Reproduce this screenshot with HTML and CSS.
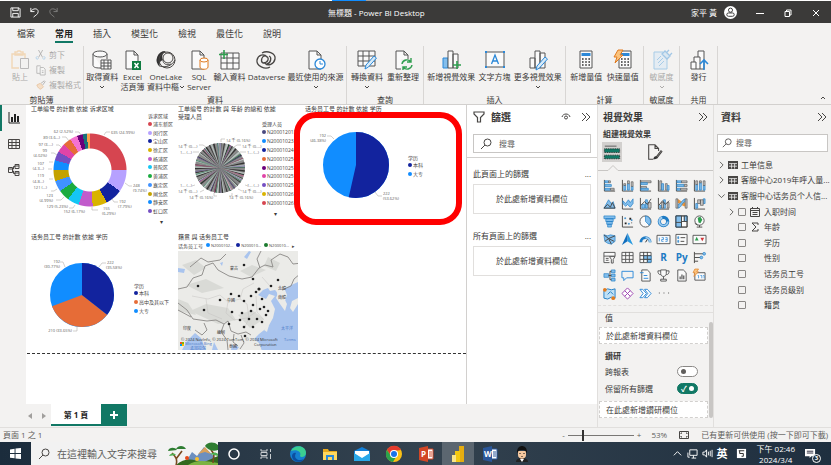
FILE: index.html
```html
<!DOCTYPE html>
<html lang="zh-Hant">
<head>
    <meta charset="UTF-8">
    <meta name="viewport" content="width=device-width, initial-scale=1.0">
    <title>無標題 - Power BI Desktop</title>
    <link rel="stylesheet" href="styles.css">
</head>
<body>
    <!-- Shared icons -->
    <svg class="defs" aria-hidden="true">
        <symbol id="i-down" viewBox="0 0 6 4"><path class="k" d="M1 1l2 2 2-2"/></symbol>
        <symbol id="i-right" viewBox="0 0 6 10"><path class="k" d="M1 1l4 4-4 4"/></symbol>
        <symbol id="i-collapse" viewBox="0 0 10 10"><path class="k" d="M1 1l4 4-4 4M5 1l4 4-4 4"/></symbol>
        <symbol id="i-search" viewBox="0 0 12 12"><circle class="k" cx="7.5" cy="4.5" r="3.5"/><path class="k" d="M5 7l-4 4"/></symbol>
        <symbol id="i-table" viewBox="0 0 10 10"><path fill="#484644" d="M0 1h10v8H0z"/><path stroke="#f3f2f1" stroke-width=".8" d="M1 3.6h8M1 6.2h8M3.6 3.6v5M6.6 3.6v5"/></symbol>
        <symbol id="i-doc" viewBox="0 0 20 20"><path class="w" d="M3 1h8l4 4v14H3zM11 1v4h4"/></symbol>
        <symbol id="i-calc" viewBox="0 0 20 20"><path class="w" d="M4 1h12v17H4z"/><path fill="#2b88d8" d="M5.500 3h9v3h-9z"/><path stroke="#333" stroke-width="1.600" stroke-dasharray="1.600 1.600" d="M6 9h9M6 12h9M6 15h9"/></symbol>
    </svg>

    <!-- Title bar -->
    <header class="titlebar">
        <div class="quick">
            <button aria-label="儲存"><svg viewBox="0 0 12 12"><path class="l" d="M1 1h9l1 1v9H1zM3 1v3h6V1M3 11V7h6v4"/></svg></button>
            <button aria-label="復原"><svg viewBox="0 0 12 12"><path class="l" d="M2 1v4h4M2 5c2-4 8-4 8 0 0 3-3 4-5 6"/></svg></button>
            <button aria-label="取消復原" disabled><svg viewBox="0 0 12 12"><path class="l" d="M10 1v4H6M10 5C8 1 2 1 2 5c0 3 3 4 5 6"/></svg></button>
        </div>
        <div class="title">無標題 - Power BI Desktop</div>
        <div class="account">
            <span>家平 黃</span>
            <svg class="avatar" viewBox="0 0 14 14"><circle cx="7" cy="7" r="7" fill="#fff"/><circle cx="7" cy="4.500" r="2.200" fill="none" stroke="#333"/><rect x="3" y="7.500" width="8" height="3.600" rx="1.800" fill="none" stroke="#333"/></svg>
            <div class="window-buttons">
                <button aria-label="最小化"><svg viewBox="0 0 8 8"><path class="l" d="M0 4.500h8"/></svg></button>
                <button aria-label="還原"><svg viewBox="0 0 8 8"><path class="l" d="M1 2.500h4.500v5H1zM2.500 2V1H7v5H6"/></svg></button>
                <button aria-label="關閉"><svg viewBox="0 0 8 8"><path class="l" d="M1 1l6 6M7 1L1 7"/></svg></button>
            </div>
        </div>
    </header>

    <!-- Ribbon tabs -->
    <nav class="menu">
        <a href="#file">檔案</a>
        <a href="#home" class="active">常用</a>
        <a href="#insert">插入</a>
        <a href="#modeling">模型化</a>
        <a href="#view">檢視</a>
        <a href="#optimize">最佳化</a>
        <a href="#help">說明</a>
    </nav>

    <!-- Ribbon -->
    <section class="ribbon">
        <div class="group disabled">
            <div class="tools clipboard">
                <button class="tool"><svg viewBox="0 0 20 20"><path fill="none" stroke="#f0b060" stroke-width="1.400" d="M9 18H2V4h13v4M5 4V2h2l1-1h2l1 1h2v3H5z"/><path fill="#f3f2f1" stroke="#666" d="M10.500 8.500h8v10h-8z"/></svg>貼上</button>
                <div class="small-tools">
                    <button><svg viewBox="0 0 12 12"><path class="k" d="M3 0l5 9M8 0L3 9"/><path stroke="#3a95dc" fill="none" d="M2 8a1.500 1.500 0 1 0 1 2M9 8a1.500 1.500 0 1 1-1 2"/></svg>剪下</button>
                    <button><svg viewBox="0 0 12 12"><path class="w" d="M5 10H1V1h4l1 1M5 3h4l2 2v7H5zM7 7h2M7 9h2"/></svg>複製</button>
                    <button><svg viewBox="0 0 12 12"><path fill="#f7c38c" stroke="#d9822b" d="M1 6l4-2 4 4-3 3c-2 0-4-2-5-5z"/><path class="k" d="M6 4l4-3 1 1-3 4"/></svg>複製格式</button>
                </div>
            </div>
            <h2>剪貼簿</h2>
        </div>
        <div class="group">
            <div class="tools">
                <button class="tool"><svg viewBox="0 0 20 20"><path class="w" d="M1 4v11c0 2 2 3 7 3h2M15 4v5"/><ellipse class="w" cx="8" cy="4" rx="7" ry="3"/><path class="w" d="M9 10h10v9H9zM9 13h10M9 16h10M12 10v9M16 10v9"/></svg>取得資料<svg class="down"><use href="#i-down"/></svg></button>
                <button class="tool"><svg viewBox="0 0 20 20"><use href="#i-doc"/><path fill="#107c41" d="M9 11h9v9H9z"/><path stroke="#fff" stroke-width="1.500" d="M11.500 13l4 5M15.500 13l-4 5"/></svg><span>Excel</span><span>活頁簿</span></button>
                <button class="tool"><svg viewBox="0 0 20 20"><path fill="#333" d="M10 1A9 9 0 0 0 4 17c-1-4 0-6 3-7C5 6 7 3 10 1z"/><circle class="k" cx="11" cy="10" r="8"/><circle class="k" cx="12" cy="8" r="5"/><path class="k" d="M4 16c5 2 12 0 15-6M7 10c0 4 4 6 8 4"/></svg><span>OneLake</span><span>資料中樞<svg class="down"><use href="#i-down"/></svg></span></button>
                <button class="tool"><svg viewBox="0 0 20 20"><use href="#i-doc"/><path fill="#fff" stroke="#e07b20" d="M11 10v7c0 3 8 3 8 0v-7"/><ellipse fill="#fff" stroke="#e07b20" cx="15" cy="10" rx="4" ry="2"/></svg><span>SQL</span><span>Server</span></button>
                <button class="tool"><svg viewBox="0 0 20 20"><path class="w" d="M2 3h18v16H2zM2 8h18M2 13h18M8 3v16M14 3v16"/><path stroke="#2f9e4f" stroke-width="1.600" d="M5 0v9M0 4.500h9"/></svg>輸入資料</button>
                <button class="tool"><svg viewBox="0 0 20 20"><path class="k" stroke-width="1.300" d="M6 3c5-3 14 0 13 6-1 5-7 8-10 4M14 17C9 20 0 16 1 10c1-5 7-7 10-3M13 6c3 1 2 7-2 8M7 13c-3-2-1-8 3-7 4 2 2 7-3 7z"/></svg>Dataverse</button>
                <button class="tool"><svg viewBox="0 0 20 20"><use href="#i-doc"/><circle cx="14" cy="14" r="5" fill="#fff" stroke="#2b88d8" stroke-width="1.300"/><path fill="none" stroke="#2b88d8" d="M14 11v3h3"/></svg>最近使用的來源<svg class="down"><use href="#i-down"/></svg></button>
            </div>
            <h2>資料</h2>
        </div>
        <div class="group">
            <div class="tools">
                <button class="tool"><svg viewBox="0 0 20 20"><path class="w" d="M1 1h17v15H1zM1 6h17M1 11h17M6 1v15M12 1v15"/><path fill="#d6eaf8" stroke="#2b88d8" d="M9 15l8-9 2.500 2-8 9-3.500 2z"/></svg>轉換資料<svg class="down"><use href="#i-down"/></svg></button>
                <button class="tool"><svg viewBox="0 0 20 20"><use href="#i-doc"/><path fill="#f3f2f1" d="M8 9h12v11H8z"/><path fill="none" stroke="#2f9e4f" stroke-width="1.400" d="M9 14a5 5 0 0 1 9-2M18 8v4h-4M19 15a5 5 0 0 1-9 2M10 20v-3h4"/></svg>重新整理</button>
            </div>
            <h2>查詢</h2>
        </div>
        <div class="group">
            <div class="tools">
                <button class="tool"><svg viewBox="0 0 20 20"><path fill="#83beec" stroke="#2b88d8" d="M2 8h5v10H2z"/><path class="w" d="M7 1h5v17H7zM12 4h5v14h-5z"/><path stroke="#2f9e4f" stroke-width="1.600" d="M16 11v8M12 15h8"/></svg>新增視覺效果</button>
                <button class="tool"><svg viewBox="0 0 20 20"><path class="w" d="M1 2h18v15H1z"/><path fill="#2b88d8" d="M0 1h2v2H0zM18 1h2v2h-2zM0 16h2v2H0zM18 16h2v2h-2z"/><path fill="none" stroke="#2b88d8" stroke-width="1.300" d="M6.500 14L10 5l3.500 9M7.500 11h5"/></svg>文字方塊</button>
                <button class="tool"><svg viewBox="0 0 20 20"><path class="w" d="M2 8h5v10H2zM7 1h5v17H7zM12 3h5v15h-5z"/><path fill="#d6eaf8" stroke="#2b88d8" d="M9 16l8-9 2.500 2-8 9-3.500 2z"/></svg>更多視覺效果<svg class="down"><use href="#i-down"/></svg></button>
            </div>
            <h2>插入</h2>
        </div>
        <div class="group">
            <div class="tools">
                <button class="tool"><svg viewBox="0 0 20 20"><use href="#i-calc"/></svg>新增量值</button>
                <button class="tool"><svg viewBox="0 0 20 20"><use href="#i-calc" x="2"/><path fill="#fbc37c" stroke="#e07b20" d="M5 0h5L7 5h3l-8 8 2-6H1z"/></svg>快速量值</button>
            </div>
            <h2>計算</h2>
        </div>
        <div class="group">
            <div class="tools disabled">
                <button class="tool"><svg viewBox="0 0 20 20"><path fill="#cfe5f6" stroke="#3a95dc" d="M2 2h9l4 6v11H2zM5 10l4-4M6 13l5-5M7 16l5-5"/><path fill="#b5d8f2" stroke="#2b88d8" stroke-width="1.300" d="M10 4l3-3 5 5-3 3zM15 2l2-2M18 5l2-2"/></svg>敏感度<svg class="down"><use href="#i-down"/></svg></button>
            </div>
            <h2>敏感度</h2>
        </div>
        <div class="group">
            <div class="tools">
                <button class="tool"><svg viewBox="0 0 20 20"><path class="w" d="M2 12h5v7H2zM5 12V7h6v12H7M9 7V1h6v18h-4"/><path fill="none" stroke="#2b88d8" stroke-width="1.600" d="M15 20v-9M11 14l4-4 4 4"/></svg>發行</button>
            </div>
            <h2>共用</h2>
        </div>
        <button class="fold" aria-label="摺疊功能區"><svg viewBox="0 0 6 4"><path class="k" d="M1 3l2-2 2 2"/></svg></button>
    </section>

    <!-- Workspace -->
    <main class="workspace">
        <div class="editor">
            <div class="stage">
                <nav class="rail">
                    <button class="active" aria-label="報表檢視"><svg viewBox="0 0 12 12"><path stroke="#222" fill="none" d="M1 0v11h11"/><path fill="#222" d="M3 5h2v5H3zM6 2h2v8H6zM9 4h2v6H9z"/></svg></button>
                    <button aria-label="資料表檢視"><svg viewBox="0 0 12 12"><path class="k" d="M.5 1.500h11v9H.5zM.5 4.500h11M.5 7.500h11M4 1.500v9M8 1.500v9"/></svg></button>
                    <button aria-label="模型檢視"><svg viewBox="0 0 12 12"><path class="k" d="M.5 3.500h4v5h-4zM7 .5h4v4H7zM7 7.500h4v4H7zM4.500 5h1V2.500H7M4.500 7h1v2.500H7M.5 5h4M7 2h4M7 9h4"/></svg></button>
                </nav>

                <section class="canvas">
                    <article class="visual">
                        <h3>工单编号 的計數 依據 诉求区域</h3>
                        <div class="chart">
                            <svg class="plot donut" viewBox="0 0 115 110" width="115" height="110">
                                <path class="lead" d="M73 22l2-3h4M94 70l4 3h3M81 86l2 3h4M61 94v3h6M44 92l-2 3h-4M33 84l-3 3h-5M26 76l-3 2h-3M22 66h-4M21 56h-4M22 49h-4M26 42l-3-2h-3M31 35l-3-3h-3M38 28l-3-4h-4M50 22l-2-3h-4"/>
                                <g class="lbl">
                                    <text x="80" y="21">635 (24.99%)</text>
                                    <text x="102" y="74">248</text><text x="102" y="79">(9.74%)</text>
                                    <text x="88" y="90">192</text><text x="87" y="95">(7.79%)</text>
                                    <text x="72" y="97">155</text><text x="71" y="102">(6.29%)</text>
                                    <text x="54" y="100" text-anchor="end">152 (6.17%)</text>
                                    <text x="37" y="95" text-anchor="end">129 (5.23%)</text>
                                    <text x="22" y="84" text-anchor="end">123</text><text x="22" y="89" text-anchor="end">(4.99%)</text>
                                    <text x="16" y="76" text-anchor="end">121 (...)</text>
                                    <text x="13" y="64" text-anchor="end">119</text><text x="13" y="70" text-anchor="end">(4.8...)</text>
                                    <text x="13" y="52" text-anchor="end">107</text><text x="13" y="57" text-anchor="end">(4.3...)</text>
                                    <text x="16" y="39" text-anchor="end">99</text><text x="16" y="44" text-anchor="end">(4.02%)</text>
                                    <text x="22" y="33" text-anchor="end">97 (3....)</text>
                                    <text x="29" y="26" text-anchor="end">89 (3.6...)</text>
                                    <text x="42" y="20" text-anchor="end">62 (2.52%)</text>
                                </g>
                            </svg>
                            <div class="legend tall">
                                <h4>诉求区域</h4>
                                <ul>
                                    <li class="c-red">浦东新区</li><li class="c-lav">闵行区</li><li class="c-navy">宝山区</li><li class="c-gold">徐汇区</li><li class="c-orchid">杨浦区</li><li class="c-cyan">普陀区</li><li class="c-green">黄浦区</li><li class="c-sky">嘉定区</li><li class="c-olive">闸北区</li><li class="c-blue">静安区</li><li class="c-violet">虹口区</li>
                                </ul>
                                <span class="more">▾</span>
                            </div>
                        </div>
                    </article>

                    <article class="visual">
                        <h3>工单编号 的計數 與 年龄 的總和 依據 受理人员</h3>
                        <div class="chart">
                            <svg class="plot" viewBox="0 0 84 100" width="84" height="100">
                                <g class="spokes" transform="rotate(-90 42 47)">
                                    <circle cx="42" cy="47" r="12.500" pathLength="100" stroke="#8a8a8a"/>
                                    <circle cx="42" cy="47" r="12.500" pathLength="100" stroke="#333" stroke-dasharray="1 1.600 .7 2"/>
                                    <circle cx="42" cy="47" r="12.500" pathLength="100" stroke="#b8c4c0" stroke-dasharray=".8 3.200 1.400 4"/>
                                    <circle cx="42" cy="47" r="12.500" pathLength="100" stroke="#6b5a9a" stroke-dasharray=".4 6.500 .5 9"/>
                                    <circle cx="42" cy="47" r="12.500" pathLength="100" stroke="#2f7a58" stroke-dasharray=".4 8.800" stroke-dashoffset="3"/>
                                    <circle cx="42" cy="47" r="12.500" pathLength="100" stroke="#c45a8a" stroke-dasharray=".4 11.300" stroke-dashoffset="5"/>
                                </g>
                                <path class="lead" d="M43 21v-3h4M56 26l3-2h4M62 31h6M67 64l3 1M60 68l4 2M54 72v3h-3M36 72v3h3M26 69l-4 2M17 64l-3 1M28 26l-3-2h-4M21 31h-6"/>
                                <g class="lbl">
                                    <text x="48" y="21">14 千 (0.16%)</text>
                                    <text x="64" y="27">14 千 (0....)</text><text x="69" y="33">1... (...)</text>
                                    <text x="0" y="27">14 千 (0....)</text><text x="2" y="33">1... (...)</text>
                                    <text x="2" y="66">1... (...)</text><text x="0" y="72">14 千 (0....)</text>
                                    <text x="11" y="78">14 千 (0.16%)</text>
                                    <text x="69" y="66">1... (...)</text><text x="64" y="72">14 千 (0....)</text><text x="51" y="78">14 千 (0.16%)</text>
                                </g>
                            </svg>
                            <div class="legend ids">
                                <h4>受理人员</h4>
                                <ul>
                                    <li class="c-slate">N2000120189</li><li class="c-blue">N2000102325</li><li class="c-navy">N2000102465</li><li class="c-orange">N2000102505</li><li class="c-plum">N2000102525</li><li class="c-pink">N2000102555</li><li class="c-violet">N2000102585</li><li class="c-gold">N2000102625</li><li class="c-red">N2000102637</li>
                                </ul>
                                <span class="more">▾</span>
                            </div>
                        </div>
                    </article>

                    <article class="visual">
                        <h3>话务员工号 的計數 依據 学历</h3>
                        <div class="chart">
                            <svg class="plot" viewBox="0 0 103 100" width="103" height="100">
                                <g class="pie" transform="rotate(-90 51 52)">
                                    <circle cx="51" cy="52" r="16.500" pathLength="100" stroke="#118dff"/>
                                    <circle cx="51" cy="52" r="16.500" pathLength="100" stroke="#12239e" stroke-dasharray="53.620 46.380"/>
                                </g>
                                <path class="lead" d="M29 26l-3-3h-4M70 79l3 4h4"/>
                                <g class="lbl">
                                    <text x="21" y="24" text-anchor="end">192</text><text x="21" y="29" text-anchor="end">(46.38%)</text>
                                    <text x="78" y="82">222</text><text x="78" y="87">(53.62%)</text>
                                </g>
                            </svg>
                            <div class="legend middle">
                                <h4>学历</h4>
                                <ul><li class="c-navy">本科</li><li class="c-blue">大专</li></ul>
                            </div>
                        </div>
                    </article>

                    <article class="visual">
                        <h3>话务员工号 的計數 依據 学历</h3>
                        <div class="chart">
                            <svg class="plot" viewBox="0 0 103 100" width="103" height="100">
                                <g class="pie small" transform="rotate(-90 51 54)">
                                    <circle cx="51" cy="54" r="16" pathLength="100" stroke="#118dff"/>
                                    <circle cx="51" cy="54" r="16" pathLength="100" stroke="#e66c37" stroke-dasharray="33.650 66.350" stroke-dashoffset="-35.580"/>
                                    <circle cx="51" cy="54" r="16" pathLength="100" stroke="#12239e" stroke-dasharray="35.580 64.420"/>
                                </g>
                                <path class="lead" d="M34 26l-2-5h-3M68 26l3-4h4M46 86v4h-4"/>
                                <g class="lbl">
                                    <text x="29" y="22" text-anchor="end">192</text><text x="29" y="27" text-anchor="end">(30.77%)</text>
                                    <text x="76" y="23">222</text><text x="75" y="28">(35.58%)</text>
                                    <text x="41" y="91" text-anchor="end">210 (33.65%)</text>
                                </g>
                            </svg>
                            <div class="legend middle">
                                <h4>学历</h4>
                                <ul><li class="c-navy">本科</li><li class="c-orange">高中及其以下</li><li class="c-blue">大专</li></ul>
                            </div>
                        </div>
                    </article>

                    <article class="visual map">
                        <h3>籍贯 與 话务员工号</h3>
                        <ul class="map-legend">
                            <li class="plain">话务员工号</li><li class="c-blue">N2000102...</li><li class="c-navy">N200010...</li><li class="c-forest">N200010...</li><li class="plain next">▸</li>
                        </ul>
                        <svg viewBox="0 0 120 99" width="120" height="99">
                            <path fill="#ebebe8" d="M0 0h120v99H0z"/>
                            <path fill="#d9dad6" d="M4 14l14-5 10 8-12 7zM8 34l20-6 18 9-22 5zM12 60l16-7 22 4 8 12-18 4zM62 20l12-6 14 5-15 7zM60 64l14-5 12 9-14 9zM0 48l10 4 8 12-18-4zM90 6l12 6-4 8-12-5z"/>
                            <path fill="#a9c4ee" d="M80 44l5-5 5-2 2 3 5-1 3 3-2 5 4 6 5 7 2-7-3-6-4-7 7-4 11-5v69H84l-3-8-5-4 5-5 9-7 5-9 2-9-4-8 4-5-6-2-3 5-4-2z"/>
                            <path fill="#ebebe8" d="M98 38l7-4 4 10-3 9-5-3zM114 50l6-3v6l-5 8-3-4zM91 74l-2 7-3-2zM64 86l5-2 2 3-4 3zM107 31l9-12 2 8-9 7z"/>
                            <path fill="#a9c4ee" d="M28 99l-5-12-6-5-8 8-5 9zM34 99l2-8 4 8zM54 94l7 2-2 3h-6zM0 17l7 1-1 4-6-1zM66 6l5-6 2 1-4 7zM42 12l3-1-1 4z"/>
                            <path class="border" d="M0 38l9-2 6-9 9-3 3-9 8-3 5 7 11 6 13 3 10-2 7-9 6-3 8 2-2-7 9-6 8 3 5 7 9-1-2 11-6 5-3 7-9 4M0 52l9 7 6 9 14 2 9-1 8 4 4-3 3 10 7 3 8-2 5 3M12 16l11-9 7 4 12-2 6-6M46 73l-3 8 6 8 1 10M26 72l3 7-5 5-7-5M63 84l3 8-4 6M82 17l-3-9 4-8M0 59l13 7M56 83l-1 8 5 4"/>
                            <path class="state" d="M14 45l16 3 12-4 8 7 12-3 7 5M28 48l2 14 14 6M50 51l-2 11 8 7 13-2 9-6M69 53l2 14-5 11M78 45l1 16 7 8M62 48l3-10 11-6M92 35l-8-9"/>
                            <g fill="#222"><circle cx="66" cy="14" r="1.300"/><circle cx="75" cy="28" r="1.300"/><circle cx="20" cy="35" r="1.300"/><circle cx="100" cy="29" r="1.300"/><circle cx="93" cy="35" r="1.300"/><circle cx="53" cy="43" r="1.300"/><circle cx="61" cy="45" r="1.300"/><circle cx="81" cy="38" r="1.600"/><circle cx="78" cy="41" r="1.300"/><circle cx="73" cy="45" r="1.300"/><circle cx="84" cy="48" r="1.300"/><circle cx="42" cy="49" r="1.300"/><circle cx="66" cy="50" r="1.300"/><circle cx="75" cy="54" r="1.300"/><circle cx="86" cy="56" r="1.300"/><circle cx="26" cy="59" r="1.300"/><circle cx="54" cy="61" r="1.300"/><circle cx="64" cy="62" r="1.300"/><circle cx="73" cy="60" r="1.300"/><circle cx="82" cy="58" r="1.300"/><circle cx="90" cy="60" r="1.300"/><circle cx="88" cy="64" r="1.300"/><circle cx="62" cy="69" r="1.300"/><circle cx="71" cy="68" r="1.300"/><circle cx="79" cy="68" r="1.300"/><circle cx="84" cy="71" r="1.300"/><circle cx="51" cy="73" r="1.300"/><circle cx="66" cy="76" r="1.300"/><circle cx="75" cy="76" r="1.300"/><circle cx="67" cy="85" r="1.300"/></g>
                            <g class="place">
                                <text x="52" y="19">蒙古</text><text x="49" y="51">中國</text><text x="100" y="39">北韓</text><text x="100" y="48">南韓</text><text x="5" y="79">印度</text><text x="39" y="83">緬甸</text><text x="51" y="97">泰國</text><text class="sea" x="103" y="79">太平洋</text><text class="sea" x="12" y="99">孟加拉灣</text>
                                <text x="3" y="90">© 2024 NavInfo, © 2024 TomTom, © 2024 Microsoft</text><text x="76" y="95">Corporation</text><text class="sea" x="106" y="90">Terms</text>
                                <text class="sea" x="7" y="94">Microsoft Bing</text>
                            </g>
                            <path fill="#f25022" d="M2 91h2v2H2z"/><path fill="#7fba00" d="M4 91h2v2H4z"/><path fill="#00a4ef" d="M2 93h2v2H2z"/><path fill="#ffb900" d="M4 93h2v2H4z"/>
                        </svg>
                    </article>
                    <div class="highlight"></div>
                </section>

                <!-- Filters -->
                <aside class="filters">
                    <div class="pane-head">
                        <svg class="i12" viewBox="0 0 12 12"><path class="k" stroke-width="1.200" d="M1 1h10v2L7.500 6.500V11h-3V6.500L1 3z"/></svg>
                        <h2>篩選</h2>
                        <svg class="i10 push" viewBox="0 0 10 10"><path class="k" d="M1 5c1-4 7-4 8 0"/><circle class="k" cx="5" cy="5.500" r="1.500"/></svg>
                        <button aria-label="收合"><svg class="i10"><use href="#i-collapse"/></svg></button>
                    </div>
                    <label class="search"><svg class="i12"><use href="#i-search"/></svg><input type="search" aria-label="搜尋篩選" placeholder="搜尋"></label>
                    <div class="filter-group">
                        <h3>此頁面上的篩選<span>...</span></h3>
                        <div class="drop">於此處新增資料欄位</div>
                    </div>
                    <div class="filter-group">
                        <h3>所有頁面上的篩選<span>...</span></h3>
                        <div class="drop">於此處新增資料欄位</div>
                    </div>
                </aside>
            </div>

            <!-- Page tabs -->
            <nav class="pages">
                <button aria-label="上一頁"><svg viewBox="0 0 4 6"><path fill="#a19f9d" d="M4 0v6L0 3z"/></svg></button>
                <button aria-label="下一頁"><svg viewBox="0 0 4 6"><path fill="#a19f9d" d="M0 0v6l4-3z"/></svg></button>
                <a href="#page1" class="page">第 1 頁</a>
                <button class="add" aria-label="新增頁面"><svg viewBox="0 0 8 8"><path stroke="#fff" stroke-width="2" d="M4 0v8M0 4h8"/></svg></button>
            </nav>
        </div>

        <!-- Visualizations -->
        <aside class="visuals-pane">
            <div class="pane-head">
                <h2>視覺效果</h2>
                <button class="push" aria-label="收合"><svg class="i10"><use href="#i-collapse"/></svg></button>
            </div>
            <h3>組建視覺效果</h3>
            <div class="modes">
                <button class="active" aria-label="組建"><svg viewBox="0 0 20 20"><path stroke="#555" d="M2 3.500h13"/><path fill="#117865" stroke="#222" stroke-dasharray="1 1" d="M1.500 6.500h17v4h-17zM1.500 13.500h17v4h-17z"/></svg></button>
                <button aria-label="格式"><svg viewBox="0 0 20 20"><path class="k" stroke-width="1.200" d="M8 18H3V2h7l4 4v3M10 2v4h4M17 8l-6 8M18 9l-6 8"/><path fill="#333" d="M8 18c1-4 3-4 5-2-1 2-3 2-5 2z"/></svg></button>
            </div>
            <svg class="caret" viewBox="0 0 116 8" preserveAspectRatio="xMinYMid slice"><path class="line" d="M0 6.500h10l5-5 5 5h196"/></svg>
            <div class="gallery">
                <button aria-label="堆疊橫條圖"><svg viewBox="0 0 14 14"><path class="k" d="M1.500 1v12H13"/><path class="b" d="M2 2h4v2H2zM2 6h7v2H2zM2 10h6v2H2z"/><path class="g" d="M6 2h2v2H6zM8 10h4v2H8z"/></svg></button>
                <button aria-label="堆疊直條圖"><svg viewBox="0 0 14 14"><path class="k" d="M1.500 1v12H13"/><path class="b" d="M3 7h2v5H3zM7 5h2v7H7zM11 8h2v4h-2z"/><path class="g" d="M3 5h2v2H3zM7 2h2v3H7zM11 3h2v5h-2z"/></svg></button>
                <button aria-label="群組橫條圖"><svg viewBox="0 0 14 14"><path class="k" d="M1.500 1v12H13"/><path class="g" d="M2 2h11v2H2zM2 8h6v2H2z"/><path class="b" d="M2 4h7v2H2zM2 10h8v2H2z"/></svg></button>
                <button aria-label="群組直條圖"><svg viewBox="0 0 14 14"><path class="k" d="M1.500 1v12H13"/><path class="g" d="M3 2h2v10H3zM9 5h2v7H9z"/><path class="b" d="M5 5h2v7H5zM11 7h2v5h-2z"/></svg></button>
                <button aria-label="百分比橫條圖"><svg viewBox="0 0 14 14"><path class="k" d="M1.500 1v12H13"/><path class="b" d="M2 2h5v2H2zM2 6h8v2H2zM2 10h4v2H2z"/><path class="g" d="M7 2h6v2H7zM10 6h3v2h-3zM6 10h7v2H6z"/></svg></button>
                <button aria-label="百分比直條圖"><svg viewBox="0 0 14 14"><path class="k" d="M1.500 1v12H13"/><path class="b" d="M3 6h2v6H3zM7 4h2v8H7zM11 7h2v5h-2z"/><path class="g" d="M3 2h2v4H3zM7 2h2v2H7zM11 2h2v5h-2z"/></svg></button>

                <button aria-label="折線圖"><svg viewBox="0 0 14 14"><path class="b" d="M1 12l5-9 3 4 2-2 2 7z"/><path class="k" d="M1 12l4-4 3 3 2-5 3 6z"/></svg></button>
                <button aria-label="區域圖"><svg viewBox="0 0 14 14"><path class="k" d="M1.500 1v12H13"/><path class="b" d="M2 4l3 3 3-4 2 3 3-4v5l-3 4-3-3-2 2-3-3z"/></svg></button>
                <button aria-label="折線與直條圖"><svg viewBox="0 0 14 14"><path class="k" d="M1.500 1v12H13"/><path class="b" d="M3 8h3v4H3zM7 3h2v9H7z"/><path class="g" d="M10 6h3v6h-3z"/><path class="k" d="M2 9l4-4 3 3 4-6"/></svg></button>
                <button aria-label="折線與群組直條圖"><svg viewBox="0 0 14 14"><path class="k" d="M1.500 1v12H13"/><path class="b" d="M3 9h2v3H3zM7 3h2v9H7z"/><path class="g" d="M5 6h2v6H5zM11 6h2v6h-2z"/><path class="k" d="M2 9l4-5 3 4 4-4"/></svg></button>
                <button aria-label="緞帶圖"><svg viewBox="0 0 14 14"><path fill="#f0983a" d="M2 2c4 1 4 4 10 4v4C8 11 6 7 2 6z"/><path class="b" d="M3 8c4 0 4-5 8-6v3c-4 1-4 7-8 7z"/><path class="g" d="M1 2h2v10H1zM11 2h2v10h-2z"/></svg></button>
                <button aria-label="瀑布圖"><svg viewBox="0 0 14 14"><path class="k" d="M1.500 1v12H13"/><path class="b" d="M3 7h2v5H3zM11 2h2v5h-2z"/><path class="g" d="M5 3h3v4H5zM8 3h3v6H8z"/></svg></button>

                <button aria-label="漏斗圖"><svg viewBox="0 0 14 14"><path class="b" d="M1 1h12v3H1zM3 4h8v3H3zM4 7h6v3H4zM5 10h4v3H5z"/></svg></button>
                <button aria-label="散佈圖"><svg viewBox="0 0 14 14"><path class="k" d="M1.500 1v12H13"/><path fill="#222" d="M4 8h2v2H4zM9 3h2v2H9zM11 8h1v1h-1z"/><path class="b" d="M4 3h1v1H4zM8 9h1v1H8zM11 5h1v1h-1z"/></svg></button>
                <button aria-label="圓形圖"><svg viewBox="0 0 14 14"><circle class="w" cx="7" cy="7" r="6"/><path class="b" d="M7 1a6 6 0 0 1 4 10L7 7z"/></svg></button>
                <button aria-label="環圈圖"><svg viewBox="0 0 14 14"><circle cx="7" cy="7" r="4.500" fill="none" stroke="#1e7bc4" stroke-width="3.500"/><circle cx="7" cy="7" r="4.500" fill="none" stroke="#9ccbef" stroke-width="2" pathLength="10" stroke-dasharray="7 3"/></svg></button>
                <button aria-label="樹狀圖"><svg viewBox="0 0 14 14"><path class="w" d="M1 1h12v12H1z"/><path class="b" d="M1 1h6v12H1zM10 1h3v6h-3z"/><path class="k" d="M1 1h12v12H1zM7 1v12M7 7h6M1 8h6M10 1v6"/></svg></button>
                <button aria-label="地圖"><svg viewBox="0 0 14 14"><circle class="w" cx="7" cy="6" r="5"/><path fill="#2f9e4f" d="M5 3l3-1 2 3-2 4-2-1z"/><path class="k" d="M7 11v2M4 13h6M2 9l3 2"/></svg></button>

                <button aria-label="區域分布圖"><svg viewBox="0 0 14 14"><path class="b" d="M1 2l4 1 3-1 5 1v6l-4 3-4-1-3-2z"/><path class="k" d="M1 2l5 4 7-3M2 9l4-3 3 6M6 6l6 3"/></svg></button>
                <button aria-label="Azure 地圖"><svg viewBox="0 0 14 14"><path fill="#2b9be0" d="M7 0l6 13-6-4z"/><path fill="#106ebe" d="M7 0v9l-6 4z"/></svg></button>
                <button aria-label="量測計"><svg viewBox="0 0 14 14"><path fill="none" stroke="#1e7bc4" stroke-width="3" d="M2 10a5 5 0 0 1 10 0"/><path fill="none" stroke="#9ccbef" stroke-width="2" d="M7 5a5 5 0 0 1 5 5"/><path stroke="#222" d="M7 10l2-3"/></svg></button>
                <button aria-label="卡片"><svg viewBox="0 0 14 14"><path class="w" d="M0 2.500h14v9H0z"/><path fill="none" stroke="#2b88d8" stroke-width=".8" d="M2.500 5v4M5 5h2v2H5v2h2M9 5h2v4H9M9 7h2"/></svg></button>
                <button aria-label="多列卡片"><svg viewBox="0 0 14 14"><path class="w" d="M1 1.500h12v11H1z"/><path class="b" d="M3 4h1v2H3zM3 8h1v2H3z"/><path class="k" d="M6 5h5M6 9h4"/></svg></button>
                <button aria-label="KPI"><svg viewBox="0 0 14 14"><path class="w" d="M0 2.500h14v9H0z"/><path fill="#2f9e4f" d="M2 8l2-4 2 4z"/><path fill="#d13438" d="M8 5h4l-2 4z"/></svg></button>

                <button aria-label="交叉分析篩選器"><svg viewBox="0 0 14 14"><path class="w" d="M1 1.500h12v4H1zM1 5.500v7h6M3 8h3M3 10h3"/><path class="w" d="M7 6h6l-2 3v4H9V9z"/></svg></button>
                <button aria-label="資料表"><svg viewBox="0 0 14 14"><path class="w" d="M1 1.500h12v11H1zM1 5h12M1 9h12M5 1v11M9 1v11"/></svg></button>
                <button aria-label="矩陣"><svg viewBox="0 0 14 14"><path class="w" d="M1 1.500h12v11H1z"/><path class="b" d="M5 5h8v4H5zM9 9h4v3H9z"/><path class="k" d="M1 5h12M1 9h12M5 1v11M9 1v11"/></svg></button>
                <button aria-label="R 指令碼">R</button>
                <button aria-label="Python 指令碼">Py</button>
                <button aria-label="關鍵影響因數"><svg viewBox="0 0 14 14"><path class="k" d="M1.500 1v12M1.500 3h10M1.500 7h7M1.500 11h4"/><circle class="b" cx="12" cy="3" r="1.500"/><circle class="b" cx="9" cy="7" r="1.500"/></svg></button>

                <button aria-label="分解樹狀結構"><svg viewBox="0 0 14 14"><path class="b" d="M1 5h5v4H1zM9 1h4v3H9zM9 5.500h4v3H9zM9 10h4v3H9z"/><path class="k" d="M6 7h3M7.500 2.500v9M7.500 2.500H9M7.500 11.500H9"/></svg></button>
                <button aria-label="問與答"><svg viewBox="0 0 14 14"><path fill="none" stroke="#2b88d8" d="M1 2.500h12v7H6l-3 3v-3H1z"/></svg></button>
                <button aria-label="智慧敘述"><svg viewBox="0 0 14 14"><path class="w" d="M3 1h6l3 3v9H3z"/><path stroke="#2b88d8" d="M1 4h4M5 7h4M5 10h5"/></svg></button>
                <button aria-label="計量"><svg viewBox="0 0 14 14"><path class="w" d="M4 1h6v4c0 4-6 4-6 0zM4 2H1c0 3 1 4 3 4M10 2h3c0 3-1 4-3 4M7 8v3M4 13v-2h6v2z"/></svg></button>
                <button aria-label="分頁報表"><svg viewBox="0 0 14 14"><path class="w" d="M3 1h6l3 3v9H3z"/><path fill="#222" d="M5 8h1v3H5zM7 6h1v5H7zM9 7h1v4H9z"/></svg></button>
                <button aria-label="新卡片"><svg viewBox="0 0 14 14"><path class="w" d="M2 4h11v8H2z"/><path fill="none" stroke="#2b88d8" stroke-width=".8" d="M5 7h1v3M8 7h1.500v3M11 7h1v3"/><path fill="#fbc37c" stroke="#e07b20" stroke-width=".7" d="M2 0h4L4 3h2L1 8l1-4H0z"/></svg></button>

                <button aria-label="ArcGIS"><svg viewBox="0 0 14 14"><path fill="#bfe0f5" stroke="#1e7bc4" d="M1 4l4-2 4 1 4-1v10l-4-1-4 2-4-1z"/><path fill="none" stroke="#1e7bc4" d="M5 8l3-3 3 3"/><circle cx="2" cy="3" r="2" fill="#e07b20"/><circle cx="11" cy="12" r="2" fill="#e07b20"/></svg></button>
                <button aria-label="Power Apps"><svg viewBox="0 0 14 14"><path fill="#fff" stroke="#9b3fae" d="M7 1l6 6-6 6-6-6zM4 4l6 6M10 4l-6 6"/></svg></button>
                <button aria-label="Power Automate"><svg viewBox="0 0 14 14"><path fill="#fff" stroke="#2b88d8" d="M6 2.500h3l4 4.500-4 4.500H6L9.500 7z"/><path fill="#fff" stroke="#2b88d8" d="M1 2.500h3L8 7l-4 4.500H1L4.500 7z"/></svg></button>
                <button aria-label="更多"><svg viewBox="0 0 14 14"><path fill="#555" d="M2 6h1v1H2zM7 6h1v1H7zM12 6h1v1h-1z"/></svg></button>
            </div>
            <div class="wells">
                <div class="well-body">
                    <h4>值</h4>
                    <div class="well">於此處新增資料欄位</div>
                    <h4 class="strong">鑽研</h4>
                    <label class="switch">跨報表<input type="checkbox"></label>
                    <label class="switch">保留所有篩選<input type="checkbox" checked></label>
                    <div class="well">在此處新增鑽研欄位</div>
                </div>
                <div class="scroll"></div>
            </div>
        </aside>

        <!-- Data -->
        <aside class="data-pane">
            <div class="pane-head">
                <h2>資料</h2>
                <button class="push" aria-label="收合"><svg class="i10"><use href="#i-collapse"/></svg></button>
            </div>
            <label class="search"><svg class="i10"><use href="#i-search"/></svg><input type="search" aria-label="搜尋資料" placeholder="搜尋"></label>
            <ul class="tree">
                <li><svg class="arrow"><use href="#i-right"/></svg><svg class="i10"><use href="#i-table"/></svg><span>工单信息</span></li>
                <li><svg class="arrow"><use href="#i-right"/></svg><svg class="i10"><use href="#i-table"/></svg><span>客服中心2019年呼入量...</span></li>
                <li><svg class="arrow open"><use href="#i-right"/></svg><svg class="i10"><use href="#i-table"/></svg><span>客服中心话务员个人信...</span></li>
                <li class="field"><svg class="arrow"><use href="#i-right"/></svg><label><input type="checkbox"><svg class="i10" viewBox="0 0 10 10"><path class="k" d="M.5 1.500h9v8h-9zM.5 3.500h9M2.500 0v2M7.500 0v2M2.500 5.500h5M2.500 7.500h5"/></svg>入职时间</label></li>
                <li class="field"><i class="arrow"></i><label><input type="checkbox"><svg class="i10" viewBox="0 0 10 10"><path class="k" d="M8 3V1H2l4 4-4 4h6V7"/></svg>年龄</label></li>
                <li class="field"><i class="arrow"></i><label><input type="checkbox"><i class="i10"></i>学历</label></li>
                <li class="field"><i class="arrow"></i><label><input type="checkbox"><i class="i10"></i>性别</label></li>
                <li class="field"><i class="arrow"></i><label><input type="checkbox"><i class="i10"></i>话务员工号</label></li>
                <li class="field"><i class="arrow"></i><label><input type="checkbox"><i class="i10"></i>话务员级别</label></li>
                <li class="field"><i class="arrow"></i><label><input type="checkbox"><i class="i10"></i>籍贯</label></li>
            </ul>
        </aside>
    </main>

    <!-- Status bar -->
    <footer class="status">
        <span>頁面 1 之 1</span>
        <div class="zoom">
            <span>-</span>
            <input type="range" min="10" max="200" value="53" aria-label="縮放">
            <span>+</span>
        </div>
        <span class="percent">53%</span>
        <svg class="fit" viewBox="0 0 10 8"><path class="k" d="M.5.5h9v7h-9z"/><path class="k" d="M2 3V2h1M7 2h1v1M8 5v1H7M3 6H2V5"/></svg>
        <span class="update">已有更新可供使用 (按一下即可下載)</span>
    </footer>

    <!-- Windows taskbar -->
    <footer class="taskbar">
        <button class="start" aria-label="開始"><svg viewBox="0 0 12 12"><path fill="#fff" d="M0 1.500l5-.7v4.700H0zM6 .6l6-.6v5.500H6zM0 6.500h5v4.700l-5-.7zM6 6.500h6V12l-6-.6z"/></svg></button>
        <label class="task-search">
            <svg class="i12"><use href="#i-search"/></svg>
            <input type="search" aria-label="搜尋" placeholder="在這裡輸入文字來搜尋">
            <svg class="art" viewBox="0 0 50 23"><path fill="#6c8fbf" d="M16 23l8-13 5 4 7-9 14 13v5z"/><path fill="#d8a15c" d="M30 12l7-7 6 7-6-2z"/><path fill="#33691e" d="M8 23c8-7 17-7 26-2l16-7v9z"/><path fill="#7cb342" d="M20 23c7-5 15-5 30-2v2z"/><path fill="none" stroke="#7a4a21" stroke-width="1.600" d="M8 23c2-6-1-9-4-12M8 17l6-8M45 21l1-9-3-4"/><path fill="#2e7d32" d="M0 9c1-4 7-4 9-1zM8 7c2-4 8-4 10 0zM37 4c2-4 9-5 13-1v5c-5 2-10 0-13-4z"/><path fill="#4caf50" d="M1 14c2-3 5-3 7-1zM42 12c3-2 6-2 8 0v2z"/><circle cx="19" cy="16" r="2" fill="#e64a19"/><circle cx="29" cy="17" r="2" fill="#fbc02d"/></svg>
        </label>
        <div class="apps">
            <button aria-label="Cortana"><svg viewBox="0 0 16 16"><circle cx="8" cy="8" r="5" fill="none" stroke="#fff" stroke-width="1.500"/></svg></button>
            <button aria-label="工作檢視"><svg viewBox="0 0 16 16"><path fill="none" stroke="#c8ccd0" d="M3 3v2h6V3M3 13v-2h6v2M3 6.500h6v3H3zM12.500 3v3M12.500 8v5"/></svg></button>
            <button aria-label="Edge"><svg viewBox="0 0 16 16"><circle cx="8" cy="8" r="8" fill="#1580cf"/><path fill="#3ccf91" d="M1 5c3-7 15-6 15 2 0 4-5 5-6 3 2-4-3-7-9-5z"/><path fill="#0c4fa0" d="M6 7c-3 5 2 9 8 6-3 5-12 3-12-3 0-2 2-4 4-3z"/></svg></button>
            <button aria-label="檔案總管"><svg viewBox="0 0 16 16"><path fill="#e8a91c" d="M1 3h5l1 2h8v9H1z"/><path fill="#ffd75e" d="M1 6h14v8H1z"/><path fill="#2b88d8" d="M4 9h8v5h-2v-3H6v3H4z"/></svg></button>
            <button aria-label="郵件"><svg viewBox="0 0 16 16"><path fill="#1380d8" d="M0 5l8-4 8 4v10H0z"/><path fill="#fff" d="M1 5h14v3l-7 5-7-5z"/><path fill="#28a8ea" d="M0 7l8 5 8-5v8H0z"/></svg></button>
            <button aria-label="Chrome"><svg viewBox="0 0 16 16"><circle cx="8" cy="8" r="8" fill="#fbc116"/><path fill="#e33b2e" d="M1 4a8 8 0 0 1 14 0L8 5 5 10z"/><path fill="#2ba24c" d="M1 4l4 6 5 1-3 5A8 8 0 0 1 1 4z"/><circle cx="8" cy="8" r="4" fill="#fff"/><circle cx="8" cy="8" r="3" fill="#1a73e8"/></svg></button>
            <button aria-label="PowerPoint"><svg viewBox="0 0 16 16"><path fill="#fff" stroke="#d24726" d="M8 3h7v10H8z"/><path stroke="#d24726" d="M11 6h3M11 8h3M11 10h3"/><path fill="#d24726" d="M1 2l9-2v16l-9-2z"/><text x="3" y="11">P</text></svg></button>
            <button class="active" aria-label="Power BI"><svg viewBox="0 0 16 16"><path fill="#e6ad10" d="M9 0h5v16H9z"/><path fill="#f2c811" d="M5 5h5v11H5z"/><path fill="#f9e589" d="M2 9h4v7H2z"/></svg></button>
            <button aria-label="Word"><svg viewBox="0 0 16 16"><path fill="#fff" stroke="#2b579a" d="M8 3h7v10H8z"/><path stroke="#2b579a" d="M11 6h3M11 8h3M11 10h3"/><path fill="#2b579a" d="M1 2l9-2v16l-9-2z"/><text x="2" y="11">W</text></svg></button>
            <button aria-label="使用者"><svg viewBox="0 0 16 16"><path fill="#222" d="M2 16c0-3 3-4 6-4s6 1 6 4z"/><path fill="#f6c9a0" d="M4 5h8v4c0 5-8 5-8 0z"/><path fill="#111" d="M3 6c0-8 10-8 10 0l-1 1c0-3-2-3-4-3S4 4 4 7z"/><path fill="#fff" d="M6 13h4l-2 3z"/><path fill="#111" d="M5.500 7h1v1h-1zM9.500 7h1v1h-1zM7 10h2v.6H7z"/></svg></button>
        </div>
        <div class="tray">
            <svg viewBox="0 0 12 12"><path class="l" d="M2 8l4-4 4 4"/></svg>
            <svg viewBox="0 0 12 12"><path class="l" d="M3 2h8v6H3zM7 8v3M5 11h5M1 5v5h2"/></svg>
            <svg viewBox="0 0 12 12"><path class="l" d="M1 4.500h2L5 2v8L3 7.500H1zM7 4v4M9 3v6M11 2v8"/></svg>
            <span class="lang">英</span>
            <svg viewBox="0 0 12 12"><path fill="#fff" d="M1 1h10v10H1z"/><path fill="none" stroke="#222" d="M4 3v3h4v3H6M3 3h6"/></svg>
            <div class="clock">下午 02:46<br>2024/3/4</div>
            <div class="notice"><svg viewBox="0 0 12 12"><path fill="#fff" d="M0 1h11v8H7l-2 2V9H0z"/><path stroke="#223" d="M2 3.500h7M2 5.500h7"/></svg><b>3</b></div>
        </div>
    </footer>
</body>
</html>
```
FILE: styles.css
```css
* {
    box-sizing: border-box;
}
body {
    margin: 0;
    height: 100vh;
    display: flex;
    flex-direction: column;
    overflow: hidden;
    background: #f3f2f1;
    color: #3b3a39;
    font-family: "Open Sans", "Noto Sans CJK TC", "Noto Sans CJK SC", sans-serif;
    font-size: 8px;
    line-height: 10px;
}
h2, h3, h4, ul {
    margin: 0;
    padding: 0;
    font-weight: normal;
    list-style: none;
}
button {
    display: flex;
    align-items: center;
    justify-content: center;
    margin: 0;
    padding: 0;
    border: 0;
    background: none;
    color: inherit;
    font: inherit;
}
a {
    color: inherit;
    text-decoration: none;
}
input {
    margin: 0;
    font: inherit;
    color: inherit;
}
svg {
    flex: none;
    overflow: visible;
}
.defs {
    position: absolute;
    width: 0;
    height: 0;
}
.k { fill: none; stroke: #484644; }
.w { fill: #fafafa; stroke: #555; }
.l { fill: none; stroke: #fff; }
.b { fill: #83beec; stroke: #1e7bc4; stroke-width: .7; }
.g { fill: #c8c6c4; stroke: #555; stroke-width: .7; }
.i10 { width: 10px; height: 10px; }
.i12 { width: 12px; height: 12px; }
.push { margin-left: auto; }

/* Title bar */
.titlebar {
    display: grid;
    grid-template-columns: 328fr 363fr 140fr;
    align-items: center;
    flex: none;
    height: 23px;
    padding-top: 2px;
    background: linear-gradient(90deg, #fff 40%, #118dff 40% 44%, #a19f9d 44% 59%, #fff 59%) top / 100% 1px no-repeat #3b3a39;
    color: #fff;
}
.quick {
    display: flex;
    gap: 8px;
    padding-left: 10px;
}
.quick svg {
    width: 11px;
    height: 11px;
}
.quick button:disabled {
    opacity: .35;
}
.account {
    display: flex;
    align-items: center;
    gap: 7px;
}
.avatar {
    width: 13px;
    height: 13px;
}
.window-buttons {
    display: flex;
    flex: 1;
    justify-content: space-between;
    padding: 0 11px 0 12px;
}
.window-buttons svg {
    width: 8px;
    height: 8px;
}

/* Ribbon */
.menu {
    display: flex;
    flex: none;
    gap: 20px;
    height: 23px;
    padding: 4px 17px 0;
    font-size: 9px;
    line-height: 13px;
}
.menu a {
    height: 16px;
}
.menu .active {
    border-bottom: 2px solid #117865;
    color: #222;
    font-weight: bold;
}
.ribbon {
    display: grid;
    grid-template-columns: 84fr 263fr 77fr 142fr 78fr 36fr 38fr 113fr;
    flex: none;
    height: 59px;
    border-bottom: 1px solid #d2d0ce;
}
.group {
    display: flex;
    flex-direction: column;
    justify-content: space-between;
    min-width: 0;
    padding-top: 4px;
    border-right: 1px solid #d8d6d4;
}
.group h2 {
    text-align: center;
    font-size: 8px;
    line-height: 9px;
}
.tools {
    display: flex;
    justify-content: space-evenly;
}
.tool {
    flex-direction: column;
    justify-content: flex-start;
    white-space: nowrap;
}
.tool > svg:first-child {
    width: 20px;
    height: 20px;
    margin-bottom: 2px;
}
.tool .down {
    width: 6px;
    height: 4px;
    margin-top: 3px;
}
.tool span {
    display: flex;
    align-items: center;
}
.tool span .down {
    margin: 0;
}
.disabled .tool, .disabled .small-tools {
    opacity: .4;
}
.clipboard {
    justify-content: flex-start;
    gap: 6px;
    padding-left: 10px;
}
.small-tools {
    display: flex;
    flex-direction: column;
    gap: 5px;
}
.small-tools button {
    justify-content: flex-start;
    gap: 3px;
}
.small-tools svg {
    width: 10px;
    height: 10px;
}
.fold {
    align-self: end;
    justify-self: end;
    padding: 4px 5px;
}
.fold svg {
    width: 6px;
    height: 4px;
}

/* Workspace */
.workspace {
    display: flex;
    flex: 1;
    min-height: 0;
}
.editor {
    display: flex;
    flex: 1;
    flex-direction: column;
    min-width: 0;
    border-right: 1px solid #e1dfdd;
}
.stage {
    display: flex;
    flex: 1;
    min-height: 0;
}
.rail {
    width: 26px;
}
.rail button {
    width: 26px;
    height: 26px;
    border-left: 2px solid transparent;
}
.rail .active {
    border-color: #117865;
}
.rail svg {
    width: 12px;
    height: 12px;
}
.canvas {
    position: relative;
    display: grid;
    flex: 1;
    grid-template-columns: 147fr 127fr 161fr;
    grid-template-rows: 128px 120px;
    align-content: start;
    min-width: 0;
    padding-left: 5px;
    background: #fff;
}
.canvas::after {
    content: "";
    grid-column: 1 / -1;
    margin-left: -4px;
    border-top: 1px dashed #333;
}
.visual {
    min-width: 0;
    overflow: hidden;
}
.visual h3 {
    padding-right: 22px;
    font-size: 6px;
    line-height: 8px;
}
.chart {
    display: flex;
}
.donut {
    background:
        radial-gradient(circle at 59px 57px, #fff 21px, transparent 22px 36px, #fff 37px),
        conic-gradient(at 59px 57px,
            #d64550 25%, #b6a1ff 0 34.7%, #12239e 0 42.5%, #d9b300 0 48.8%,
            #c15bcb 0 55%, #15c6f4 0 60.2%, #1aab40 0 65.2%, #4092ff 0 70.1%,
            #c4a200 0 74.9%, #118dff 0 79.3%, #744ec2 0 83.3%, #e044a7 0 87.2%,
            #e66c37 0 90.9%, #f472d0 0 94.2%, #6b007b 0 96.7%, #197278 0 98.6%,
            #ff9e4a 0);
}
.pie circle {
    fill: none;
    stroke-width: 33px;
}
.pie.small circle {
    stroke-width: 32px;
}
.spokes circle {
    fill: none;
    stroke-width: 25px;
}
.lead {
    fill: none;
    stroke: #b3b0ad;
    stroke-width: .6px;
}
.lbl {
    fill: #605e5c;
    font-size: 4px;
}
.legend {
    display: flex;
    flex-direction: column;
    font-size: 5px;
    line-height: 7px;
    white-space: nowrap;
}
.legend h4 {
    font-size: 5px;
}
.legend ul {
    display: flex;
    flex-direction: column;
    justify-content: space-between;
}
.legend li::before, .map-legend li::before {
    content: "";
    display: inline-block;
    width: 4px;
    height: 4px;
    margin-right: 1px;
    border-radius: 50%;
    background: currentColor;
}
.legend li, .map-legend li {
    -webkit-text-fill-color: #484644;
}
.legend.tall ul {
    height: 94px;
    margin-top: 1px;
}
.legend.ids ul {
    height: 78px;
    margin-top: 1px;
}
.legend.middle {
    padding-top: 42px;
}
.legend.middle ul {
    gap: 2px;
}
.more {
    padding-left: 12px;
    font-size: 6px;
}
.legend.tall .more, .legend.ids .more {
    margin-top: 4px;
}
.legend.tall {
    padding-left: 2px;
}
.map-legend {
    display: flex;
    gap: 3px;
    height: 10px;
    font-size: 4px;
    line-height: 10px;
    white-space: nowrap;
}
.map-legend .plain {
    font-size: 5px;
}
.map-legend .plain::before {
    display: none;
}
.map svg {
    display: block;
    overflow: hidden;
}
.border { fill: none; stroke: #8a8886; stroke-width: .9px; }
.state { fill: none; stroke: #c4c2c0; stroke-width: .5px; }
.place { fill: #333; font-size: 4px; }
.place .sea { fill: #4a78c8; }
.c-red { color: #d64550; }
.c-lav { color: #b6a1ff; }
.c-navy { color: #12239e; }
.c-gold { color: #d9b300; }
.c-orchid { color: #c15bcb; }
.c-cyan { color: #15c6f4; }
.c-green { color: #1aab40; }
.c-sky { color: #4092ff; }
.c-olive { color: #c4a200; }
.c-blue { color: #118dff; }
.c-violet { color: #744ec2; }
.c-orange { color: #e66c37; }
.c-plum { color: #6b007b; }
.c-pink { color: #e044a7; }
.c-slate { color: #4a4a80; }
.c-forest { color: #1a7a2e; }
.highlight {
    position: absolute;
    top: 7px;
    right: 4px;
    width: 168px;
    height: 113px;
    border: 6px solid #f00;
    border-radius: 22px;
}

/* Side panes */
.pane-head {
    display: flex;
    align-items: center;
    gap: 5px;
    height: 24px;
}
.pane-head h2 {
    font-size: 10px;
    font-weight: bold;
}
.search {
    display: flex;
    align-items: center;
    gap: 7px;
    height: 19px;
    padding: 0 6px;
    border: 1px solid #c8c6c4;
    background: #fff;
}
.search input, .task-search input {
    flex: 1;
    width: 0;
    min-width: 0;
    padding: 0;
    border: 0;
    outline: 0;
    background: none;
}
input::-webkit-search-cancel-button {
    display: none;
}
input::placeholder {
    color: #605e5c;
    opacity: 1;
}
.filters {
    width: 131px;
    padding: 0 6px;
    border-left: 1px solid #d2d0ce;
    background: #fff;
}
.filters .pane-head {
    gap: 6px;
}
.filters .pane-head button {
    margin-left: 4px;
}
.filters .search {
    margin-top: 5px;
}
.filter-group {
    padding-top: 7px;
}
.search + .filter-group {
    margin: 4px -6px 0;
    padding: 11px 6px 10px;
    border-top: 1px solid #d2d0ce;
}
.filter-group h3 {
    display: flex;
    justify-content: space-between;
    margin-bottom: 5px;
    font-size: 8px;
    line-height: 10px;
}
.drop {
    border: 1px solid #e1dfdd;
    line-height: 28px;
    text-align: center;
}
.pages {
    display: flex;
    flex: none;
    height: 23px;
    padding-left: 23px;
}
.pages button {
    width: 14px;
}
.pages svg {
    width: 4px;
    height: 6px;
}
.pages .page {
    width: 50px;
    height: 22px;
    border-bottom: 2px solid #117865;
    background: #fff;
    color: #222;
    font-weight: bold;
    line-height: 21px;
    text-align: center;
}
.pages .add {
    width: 26px;
    height: 22px;
    background: #117865;
}
.pages .add svg {
    width: 8px;
    height: 8px;
}
.visuals-pane {
    display: flex;
    flex-direction: column;
    width: 116px;
    border-right: 1px solid #e1dfdd;
}
.visuals-pane .pane-head, .visuals-pane h3 {
    padding: 0 5px;
}
.visuals-pane h3 {
    font-size: 8px;
    font-weight: bold;
}
.modes {
    display: flex;
    gap: 23px;
    padding: 3px 4px 0;
}
.modes button {
    width: 20px;
    height: 20px;
}
.modes .active {
    background: #d2d0ce;
}
.modes svg {
    width: 18px;
    height: 18px;
}
.caret {
    width: 100%;
    height: 8px;
    margin-top: 2px;
    overflow: hidden;
}
.line {
    fill: none;
    stroke: #c8c6c4;
}
.gallery {
    display: grid;
    grid-template-columns: repeat(6, 1fr);
    grid-auto-rows: 18px;
    margin-top: 4px;
    padding: 0 4px 3px 2px;
    border-bottom: 1px dashed #e1dfdd;
}
.gallery button {
    color: #1e7bc4;
    font-size: 10px;
    font-weight: bold;
}
.gallery svg {
    width: 13px;
    height: 13px;
}
.wells {
    display: flex;
    margin-top: 6px;
    border-top: 1px solid #e1dfdd;
}
.well-body {
    flex: 1;
    padding-left: 1px;
}
.well-body h4 {
    padding: 0 6px 4px;
    font-size: 8px;
}
.well-body .strong {
    padding: 7px 6px 2px;
    font-weight: bold;
}
.well {
    padding-left: 6px;
    border: 1px dashed #d2d0ce;
    background: #fff;
    line-height: 15px;
}
.switch {
    display: flex;
    align-items: center;
    justify-content: space-between;
    height: 17px;
    padding: 0 10px 0 6px;
}
.switch + .well {
    margin-top: 4px;
}
.switch input {
    display: flex;
    align-items: center;
    width: 21px;
    height: 11px;
    padding: 0 3px;
    border: 1px solid #8a8886;
    border-radius: 6px;
    background: #fff;
    appearance: none;
}
.switch input::after {
    content: "";
    width: 5px;
    height: 5px;
    border-radius: 50%;
    background: #605e5c;
}
.switch input:checked {
    justify-content: space-between;
    border-color: #117865;
    background: #117865;
}
.switch input:checked::before {
    content: "✓";
    color: #fff;
    font-size: 8px;
    font-weight: bold;
}
.switch input:checked::after {
    background: #fff;
}
.scroll {
    width: 4px;
    margin: 9px 0 0 1px;
    border-radius: 2px;
    background: #c8c6c4;
}
.data-pane {
    width: 117px;
    padding: 0 3px;
}
.data-pane .pane-head {
    padding: 0 1px 0 4px;
}
.data-pane .search {
    margin-top: 5px;
    height: 18px;
    gap: 4px;
    padding: 0 4px;
}
.tree {
    display: grid;
    grid-auto-rows: 1fr;
    height: 156px;
    margin-top: 5px;
    white-space: nowrap;
}
.tree li, .tree label {
    display: flex;
    align-items: center;
    gap: 3px;
}
.arrow {
    width: 5px;
    height: 8px;
    margin: 0 1px 0 2px;
}
.arrow.open {
    transform: rotate(90deg);
}
.tree .field {
    padding-left: 10px;
}
.tree input {
    width: 8px;
    height: 8px;
    border: 1px solid #8a8886;
    border-radius: 1px;
    appearance: none;
}
.tree label {
    gap: 4px;
}

/* Status bar */
.status {
    display: flex;
    align-items: center;
    flex: none;
    height: 15px;
    padding: 0 3px;
    border-top: 1px solid #e1dfdd;
    color: #605e5c;
    white-space: nowrap;
}
.zoom {
    display: flex;
    align-items: center;
    gap: 3px;
    margin-left: auto;
}
.zoom input {
    width: 66px;
    height: 12px;
    background: linear-gradient(#797775, #797775) center / 100% 1px no-repeat;
    appearance: none;
}
.zoom input::-webkit-slider-thumb {
    width: 2px;
    height: 11px;
    background: #323130;
    appearance: none;
}
.percent {
    margin: 0 12px 0 10px;
}
.fit {
    width: 10px;
    height: 8px;
}
.update {
    margin-left: 12px;
}

/* Taskbar */
.taskbar {
    display: flex;
    flex: none;
    height: 23px;
    background: linear-gradient(90deg, #1b2c3c, #33424f 50%, #1f2f3f);
    color: #fff;
}
.start {
    width: 31px;
}
.start svg {
    width: 11px;
    height: 11px;
}
.task-search {
    display: flex;
    align-items: center;
    gap: 7px;
    width: 187px;
    padding-left: 7px;
    background: #f2f2f2;
    color: #333;
    font-size: 10px;
}
.art {
    width: 50px;
    height: 23px;
    overflow: hidden;
}
.apps {
    display: flex;
}
.apps button {
    width: 32px;
}
.apps .active {
    background: #5b6670;
}
.apps svg {
    width: 16px;
    height: 16px;
}
.apps text {
    fill: #fff;
    font-size: 8px;
    font-weight: bold;
}
.tray {
    display: flex;
    align-items: center;
    gap: 4px;
    margin-left: auto;
    padding-right: 15px;
}
.tray svg {
    width: 11px;
    height: 11px;
}
.lang {
    font-size: 11px;
    font-weight: bold;
}
.tray .lang + svg {
    margin-left: 4px;
}
.clock {
    padding-left: 6px;
    line-height: 11px;
    text-align: center;
    white-space: nowrap;
}
.notice {
    position: relative;
    margin-left: 6px;
    line-height: 0;
}
.notice b {
    position: absolute;
    right: -5px;
    bottom: -4px;
    width: 9px;
    height: 9px;
    border: 1px solid #fff;
    border-radius: 50%;
    background: #25333f;
    font-size: 6px;
    line-height: 7px;
    text-align: center;
}
```
